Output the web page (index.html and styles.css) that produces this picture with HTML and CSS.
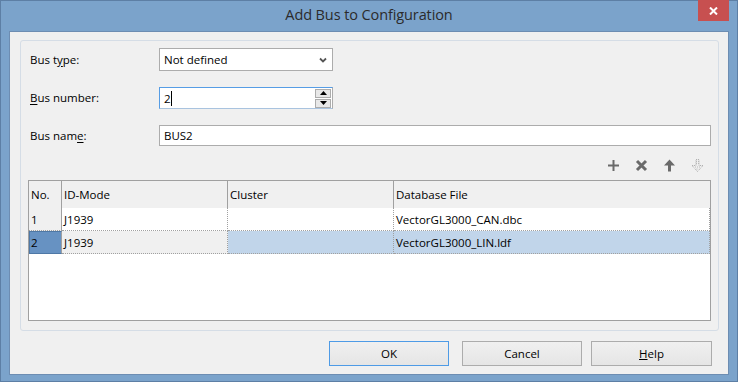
FILE: index.html
```html
<!DOCTYPE html>
<html>
<head>
<meta charset="utf-8">
<link rel="stylesheet" href="styles.css">
</head>
<body>
<div class="window">
  <div class="titlebar">
    <span></span>
    <span class="title">Add Bus to Configuration</span>
    <div class="close-wrap">
      <div class="close">
        <svg width="9" height="8" viewBox="0 0 9 8"><path d="M1 0.5 L8 7.5 M8 0.5 L1 7.5" stroke="#fff" stroke-width="2"/></svg>
      </div>
    </div>
  </div>
  <div class="client">
    <div class="group">
      <div class="form">
        <label class="lbl">Bus t<u>y</u>pe:</label>
        <div class="combo">
          <span>Not defined</span>
          <svg width="8" height="6" viewBox="0 0 8 6"><path d="M1 1.5 L4 4.5 L7 1.5" fill="none" stroke="#555" stroke-width="1.8"/></svg>
        </div>
        <label class="lbl"><u>B</u>us number:</label>
        <div class="spin">
          <span class="val">2<span class="caret"></span></span>
          <div class="spinbtns">
            <div class="sb"><svg width="7" height="4" viewBox="0 0 7 4"><path d="M0 4 L3.5 0 L7 4 Z" fill="#000"/></svg></div>
            <div class="sb"><svg width="7" height="4" viewBox="0 0 7 4"><path d="M0 0 L3.5 4 L7 0 Z" fill="#000"/></svg></div>
          </div>
        </div>
        <label class="lbl">Bus nam<u>e</u>:</label>
        <div class="textbox">BUS2</div>
      </div>
      <div class="toolbar">
        <span class="tool"><svg width="13" height="13" viewBox="0 0 13 13"><path d="M6.5 1 V12 M1 6.5 H12" stroke="#6a6a6a" stroke-width="2"/></svg></span>
        <span class="tool"><svg width="13" height="13" viewBox="0 0 13 13"><path d="M2 2 L11 11 M11 2 L2 11" stroke="#6a6a6a" stroke-width="3"/></svg></span>
        <span class="tool"><svg width="13" height="13" viewBox="0 0 13 13"><path d="M6.5 0.5 L12 6.5 H8 V12.5 H5 V6.5 H1 Z" fill="#6a6a6a"/></svg></span>
        <span class="tool"><svg width="13" height="13" viewBox="0 0 13 13"><path d="M6.5 12.5 L12 6.5 H8 V0.5 H5 V6.5 H1 Z" fill="none" stroke="#a8a8a8" stroke-width="1" stroke-dasharray="1 1"/><path d="M5.5 2 V6 M7.5 2 V6 M4 8 H9 M5.5 10 H7.5" stroke="#b8b8b8" stroke-width="1" stroke-dasharray="1 1"/></svg></span>
      </div>
      <div class="grid">
        <div class="hd c-no">No.</div>
        <div class="hd">ID-Mode</div>
        <div class="hd">Cluster</div>
        <div class="hd last">Database File</div>

        <div class="cell c-no rowhead">1</div>
        <div class="cell">J1939</div>
        <div class="cell"></div>
        <div class="cell last">VectorGL3000_CAN.dbc</div>

        <div class="cell c-no rowhead current">2</div>
        <div class="cell gray">J1939</div>
        <div class="cell sel"></div>
        <div class="cell sel last">VectorGL3000_LIN.ldf</div>
      </div>
    </div>
    <div class="buttons">
      <button class="btn default">OK</button>
      <button class="btn cancel">Cancel</button>
      <button class="btn help"><u>H</u>elp</button>
    </div>
  </div>
</div>
</body>
</html>
```

FILE: styles.css
```css
* { box-sizing: border-box; }
html, body { margin: 0; padding: 0; }
body {
  width: 738px;
  height: 382px;
  overflow: hidden;
  font-family: "Open Sans", "Noto Sans", sans-serif;
  font-size: 11.5px;
  color: #000;
}
.window {
  width: 738px;
  height: 382px;
  background: #7ba3cb;
  box-shadow: inset 0 0 0 1px #5d7fa5;
  display: flex;
  flex-direction: column;
}
.titlebar {
  height: 31px;
  display: grid;
  grid-template-columns: 1fr auto 1fr;
  flex: none;
}
.title {
  font-size: 14.5px;
  color: #2b2b2b;
  padding-top: 5px;
  letter-spacing: -0.1px;
}
.close-wrap {
  display: flex;
  justify-content: flex-end;
  padding-right: 9px;
}
.close {
  width: 31px;
  height: 21px;
  background: #c75050;
  display: flex;
  align-items: center;
  justify-content: center;
}
.client {
  margin: 0 9px 7px 9px;
  flex: 1;
  background: #f0f0f0;
  border: 1px solid #6d8db2;
  display: flex;
  flex-direction: column;
}
.group {
  margin: 8px 9px 0 10px;
  height: 291px;
  border: 1px solid #d5dde6;
  border-radius: 3px;
  padding: 7px 7px 0 7px;
  display: flex;
  flex-direction: column;
}
.form {
  display: grid;
  grid-template-columns: 129px 1fr;
  grid-template-rows: 23px 22px 21px;
  row-gap: 16px;
  padding-left: 2px;
  align-items: center;
}
.lbl { align-self: center; line-height: 16px; }
.lbl u { text-decoration-thickness: 1px; text-underline-offset: 2px; }
.combo {
  width: 174px;
  height: 23px;
  border: 1px solid #acacac;
  background: #fff;
  display: flex;
  align-items: center;
  justify-content: space-between;
  padding: 0 5px 0 4px;
}
.spin {
  width: 174px;
  height: 22px;
  border: 1px solid #569de5;
  border-right-color: #acacac;
  border-bottom-color: #a9c3df;
  background: #fff;
  display: flex;
  align-items: center;
  justify-content: space-between;
  padding-left: 4px;
}
.val { display: flex; align-items: center; }
.caret {
  display: inline-block;
  width: 1px;
  height: 15px;
  background: #000;
}
.spinbtns {
  display: flex;
  flex-direction: column;
  gap: 1px;
  padding-right: 1px;
}
.sb {
  width: 16px;
  height: 9px;
  border: 1px solid #acacac;
  background: #e8e8e8;
  display: flex;
  align-items: center;
  justify-content: center;
}
.textbox {
  height: 21px;
  border: 1px solid #acacac;
  background: #fff;
  display: flex;
  align-items: center;
  padding-left: 4px;
}
.toolbar {
  height: 34px;
  display: flex;
  justify-content: flex-end;
  align-items: center;
  padding-top: 5px;
  padding-right: 7px;
  gap: 15px;
}
.tool { width: 13px; height: 13px; display: flex; }
.grid {
  height: 141px;
  border: 1px solid #a0a0a0;
  background: #fff;
  display: grid;
  grid-template-columns: 33px 166px 166px 1fr;
  grid-template-rows: 27px 23px 23px;
  align-content: start;
}
.hd {
  background: #f0f0f0;
  border-right: 1px solid #a0a0a0;
  padding: 0 0 0 2px;
  display: flex;
  align-items: center;
}
.hd.last { border-right: none; }
.cell {
  border-right: 1px dotted #a0a0a0;
  border-bottom: 1px dotted #a0a0a0;
  padding-left: 2px;
  display: flex;
  align-items: center;
}
.cell.c-no {
  border-right: 1px solid #a0a0a0;
  background: #f0f0f0;
}
.cell.current {
  background: #6792c2;
  border: 1px solid #4e78a6;
  border-right-color: #a0a0a0;
  padding-left: 1px;
}
.cell.gray { background: #f0f0f0; }
.cell.sel { background: #c1d5ea; }
.buttons {
  margin-top: 10px;
  display: flex;
  justify-content: flex-end;
  padding-right: 16px;
}
.btn {
  font-family: inherit;
  font-size: 11.5px;
  color: #000;
  height: 25px;
  border: 1px solid #acacac;
  background: linear-gradient(#f0f0f0, #e5e5e5);
  padding: 0;
  width: 120px;
}
.btn.default { border-color: #4e9be6; margin-right: 13px; }
.btn.cancel { margin-right: 9px; }
.btn.help { width: 121px; }
```
